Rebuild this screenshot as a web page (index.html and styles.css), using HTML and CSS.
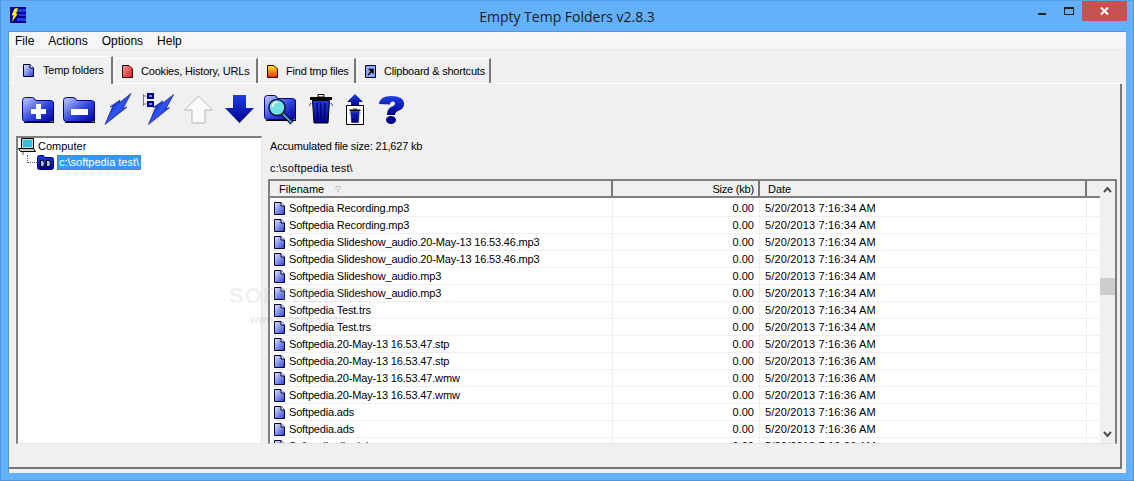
FILE: index.html
```html
<!DOCTYPE html>
<html lang="en">
<head>
    <meta charset="UTF-8">
    <title>Empty Temp Folders v2.8.3</title>
    <link rel="stylesheet" href="styles.css">
</head>
<body>
    <svg class="defs" width="0" height="0">
        <defs>
            <linearGradient id="blueDiag" x1="0" y1="0" x2="1" y2="1">
                <stop offset="0" stop-color="#c4d0fa"/>
                <stop offset="0.55" stop-color="#2f45e0"/>
                <stop offset="1" stop-color="#00009a"/>
            </linearGradient>
            <linearGradient id="blueDown" x1="0" y1="0" x2="0" y2="1">
                <stop offset="0" stop-color="#1d3fe0"/>
                <stop offset="1" stop-color="#00008c"/>
            </linearGradient>
            <linearGradient id="boltGrad" x1="0" y1="0" x2="1" y2="1">
                <stop offset="0" stop-color="#00008c"/>
                <stop offset="0.5" stop-color="#2e55f0"/>
                <stop offset="1" stop-color="#00008c"/>
            </linearGradient>
            <linearGradient id="pageBlue" x1="0" y1="0" x2="1" y2="1">
                <stop offset="0" stop-color="#e4e8fb"/>
                <stop offset="1" stop-color="#2c3fd8"/>
            </linearGradient>
            <linearGradient id="pageRed" x1="0" y1="0" x2="1" y2="1">
                <stop offset="0" stop-color="#fb9a9a"/>
                <stop offset="1" stop-color="#d81818"/>
            </linearGradient>
            <linearGradient id="pageFire" x1="0" y1="0" x2="0" y2="1">
                <stop offset="0" stop-color="#ffee20"/>
                <stop offset="1" stop-color="#e82a10"/>
            </linearGradient>
            <symbol id="page" viewBox="0 0 11 13">
                <path d="M.5.5h6.500l3.500 3.500v8.500h-10z" fill="url(#pageBlue)" stroke="#000038"/>
                <path d="M7 .5v3.500h3.500" fill="#fff" stroke="#000038"/>
            </symbol>
            <symbol id="folder" viewBox="0 0 33 29">
                <path d="M2 28h30v-21h-1v20h-29z" fill="#000"/>
                <path d="M.5 5.500q0-3 3-3h7q2 0 3 3h15q3 0 3 3v15q0 3-3 3h-25q-3 0-3-3z" fill="url(#blueDiag)" stroke="#00008c"/>
            </symbol>
            <symbol id="bolt" viewBox="0 0 28 32">
                <path d="M27 .5l-8 15 4-1.500-22 17.500 8-19-3 1.500 10-7-1 3z" fill="url(#boltGrad)" stroke="#00008c" stroke-width=".6"/>
            </symbol>
            <symbol id="bin" viewBox="0 0 24 30">
                <path d="M9 .5h6v2.500h-6z" fill="#fff" stroke="#000"/>
                <path d="M1 3h22v3h-22z" fill="#000"/>
                <path d="M3.500 6.500h17l-1.500 22.500h-14z" fill="url(#blueDown)" stroke="#000"/>
                <path d="M8 9l.7 17M12 9v17M16 9l-.7 17" stroke="#00006a" stroke-width="1.400"/>
                <path d="M2 9l-2 3M22 9l2 3" stroke="#444" fill="none"/>
            </symbol>
        </defs>
    </svg>

    <div class="window">
        <header class="titlebar">
            <svg class="app_icon" width="16" height="16" viewBox="0 0 16 16">
                <rect width="16" height="16" fill="#00008c"/>
                <path d="M7 2h9v3h-9zM9 7h7v2h-7zM7 11h9v3h-9z" fill="#1b3ff0"/>
                <path d="M8 1l-2 6 2-.5-6 8.500 1.500-7-2 .5 3-7z" fill="#ffee00"/>
            </svg>
            <div class="title">Empty Temp Folders v2.8.3</div>
            <div class="caption_btns">
                <span class="cap_min"></span>
                <span class="cap_max"></span>
                <span class="cap_close">
                    <svg width="9" height="8" viewBox="0 0 9 8"><path d="M1 .5l7 7M8 .5l-7 7" stroke="#fff" stroke-width="2"/></svg>
                </span>
            </div>
        </header>

        <div class="client">
            <nav class="menubar">
                <span>File</span>
                <span>Actions</span>
                <span>Options</span>
                <span>Help</span>
            </nav>

            <div class="tabs">
                <div class="tab active t1"><svg class="tab_icon" width="11" height="13"><use href="#page"/></svg>Temp folders</div>
                <div class="tab t2">
                    <svg class="tab_icon" width="11" height="13" viewBox="0 0 11 13"><path d="M.5.5h6.500l3.500 3.500v8.500h-10z" fill="url(#pageRed)" stroke="#300"/></svg>Cookies, History, URLs
                </div>
                <div class="tab t3">
                    <svg class="tab_icon" width="11" height="13" viewBox="0 0 11 13"><path d="M.5.5h6.500l3.500 3.500v8.500h-10z" fill="url(#pageFire)" stroke="#300"/></svg>Find tmp files
                </div>
                <div class="tab t4">
                    <svg class="tab_icon" width="11" height="13" viewBox="0 0 11 13"><path d="M.5.5h10v12h-10z" fill="#8ea6f5" stroke="#000038"/><path d="M3 10l4-4M4.500 4.500h3.500v3.500z" stroke="#000" fill="#000" stroke-width="1.300"/></svg>Clipboard &amp; shortcuts
                </div>
            </div>

            <div class="page">
                <div class="toolbar">
                    <button class="tool m8"><svg width="33" height="29"><use href="#folder"/><path d="M14 11h5v5h5v5h-5v5h-5v-5h-5v-5h5z" fill="#fff" transform="translate(0 -2)"/></svg></button>
                    <button class="tool m8"><svg width="33" height="29"><use href="#folder"/><path d="M8 14h17v6h-17z" fill="#fff"/></svg></button>
                    <button class="tool m10"><svg width="28" height="32"><use href="#bolt"/></svg></button>
                    <button class="tool m8">
                        <svg width="33" height="32" viewBox="0 0 33 32">
                            <path d="M1.500 1v12M1.500 3h3M1.500 11h3" stroke="#777" fill="none"/>
                            <path d="M5 0h7v6h-7zM5 8h7v6h-7z" fill="#00008c"/>
                            <path d="M7 2h3v2h-3zM7 10h3v2h-3z" fill="#6f8cf5"/>
                            <svg x="5" y="1" width="28" height="31"><use href="#bolt"/></svg>
                        </svg>
                    </button>
                    <button class="tool m10">
                        <svg width="31" height="29" viewBox="0 0 31 29"><path d="M15.500 1l14 14h-7.500v13h-13v-13h-7.500z" fill="#fbfbfb" stroke="#b4b4b4"/></svg>
                    </button>
                    <button class="tool m9">
                        <svg width="31" height="29" viewBox="0 0 31 29"><path d="M9 0h13v13h8l-14.500 15-14.500-15h8z" fill="url(#blueDown)"/></svg>
                    </button>
                    <button class="tool m12">
                        <svg width="33" height="32" viewBox="0 0 33 32">
                            <use href="#folder" width="33" height="29"/>
                            <path d="M18 20l10 10" stroke="#000" stroke-width="4"/>
                            <path d="M18 20l10 10" stroke="#4aa0e8" stroke-width="2"/>
                            <circle cx="13" cy="14.500" r="8" fill="#72e4e4" stroke="#113" stroke-width="1.500"/>
                            <path d="M8.500 14a5 5 0 0 1 5-5" stroke="#fff" fill="none" stroke-width="1.500"/>
                        </svg>
                    </button>
                    <button class="tool m13"><svg width="24" height="30"><use href="#bin"/></svg></button>
                    <button class="tool m14">
                        <svg width="18" height="31" viewBox="0 0 18 31">
                            <path d="M9 0l8 8h-4v4h-8v-4h-4z" fill="url(#blueDown)"/>
                            <path d="M.5 11.500h17v19h-17z" fill="#fff" stroke="#000"/>
                            <svg x="3" y="14" width="12" height="15" viewBox="0 0 24 30"><use href="#bin" width="24" height="30"/></svg>
                        </svg>
                    </button>
                    <button class="tool">
                        <svg width="27" height="29" viewBox="0 0 27 29">
                            <path d="M1 9q1-8 12-8 13 0 13 8 0 5-6 7-3 1-3 4h-8q0-6 4-8 4-1.500 4-3.500 0-2-2-2-3 0-3 3z" fill="url(#blueDown)"/>
                            <ellipse cx="13" cy="25" rx="5" ry="4" fill="#00008c"/>
                        </svg>
                    </button>
                </div>

                <div class="panes">
                    <div class="tree">
                        <div class="tree_row tree_root">
                            <svg width="19" height="17" viewBox="0 0 19 17">
                                <path d="M3.500 .5h12v10h-12z" fill="#cfd4dc" stroke="#000"/>
                                <path d="M5 2h9v7h-9z" fill="#27c4dc"/>
                                <path d="M.5 10.500h15l2 3h-15z" fill="#cdd0b8" stroke="#000"/>
                                <path d="M5 14v3" stroke="#555"/>
                            </svg>
                            <span>Computer</span>
                        </div>
                        <div class="tree_row tree_child">
                            <span class="tree_dots"></span>
                            <svg width="17" height="15" viewBox="0 0 17 15">
                                <path d="M.5 2.500q0-2 2-2h4l1 2h7q2 0 2 2v8q0 2-2 2h-12q-2 0-2-2z" fill="url(#blueDown)" stroke="#00008c"/>
                                <path d="M3.500 5.500h2q2 0 2 3t-2 3h-2zM9.500 5.500h2q2 0 2 3t-2 3h-2z" fill="#a8bcff" stroke="#000"/>
                            </svg>
                            <span class="tree_sel">c:\softpedia test\</span>
                        </div>
                    </div>

                    <div class="right">
                        <div class="info">Accumulated file size: 21,627 kb</div>
                        <div class="path">c:\softpedia test\</div>
                        <div class="list">
                            <div class="list_main">
                                <div class="list_head">
                                    <div class="hcell c_name">Filename<svg class="sort" width="6" height="7" viewBox="0 0 6 7"><path d="M.5 .5h5l-2.500 6z" fill="none" stroke="#c8c8c8"/></svg></div>
                                    <div class="hcell c_size">Size (kb)</div>
                                    <div class="hcell c_date">Date</div>
                                    <div class="hcell c_rest"></div>
                                </div>
                                <div class="list_body">
                                    <div class="row"><div class="cell c_name"><svg width="11" height="13"><use href="#page"/></svg>Softpedia Recording.mp3</div><div class="cell c_size">0.00</div><div class="cell c_date">5/20/2013 7:16:34 AM</div><div class="cell c_rest"></div></div>
                                    <div class="row"><div class="cell c_name"><svg width="11" height="13"><use href="#page"/></svg>Softpedia Recording.mp3</div><div class="cell c_size">0.00</div><div class="cell c_date">5/20/2013 7:16:34 AM</div><div class="cell c_rest"></div></div>
                                    <div class="row"><div class="cell c_name"><svg width="11" height="13"><use href="#page"/></svg>Softpedia Slideshow_audio.20-May-13 16.53.46.mp3</div><div class="cell c_size">0.00</div><div class="cell c_date">5/20/2013 7:16:34 AM</div><div class="cell c_rest"></div></div>
                                    <div class="row"><div class="cell c_name"><svg width="11" height="13"><use href="#page"/></svg>Softpedia Slideshow_audio.20-May-13 16.53.46.mp3</div><div class="cell c_size">0.00</div><div class="cell c_date">5/20/2013 7:16:34 AM</div><div class="cell c_rest"></div></div>
                                    <div class="row"><div class="cell c_name"><svg width="11" height="13"><use href="#page"/></svg>Softpedia Slideshow_audio.mp3</div><div class="cell c_size">0.00</div><div class="cell c_date">5/20/2013 7:16:34 AM</div><div class="cell c_rest"></div></div>
                                    <div class="row"><div class="cell c_name"><svg width="11" height="13"><use href="#page"/></svg>Softpedia Slideshow_audio.mp3</div><div class="cell c_size">0.00</div><div class="cell c_date">5/20/2013 7:16:34 AM</div><div class="cell c_rest"></div></div>
                                    <div class="row"><div class="cell c_name"><svg width="11" height="13"><use href="#page"/></svg>Softpedia Test.trs</div><div class="cell c_size">0.00</div><div class="cell c_date">5/20/2013 7:16:34 AM</div><div class="cell c_rest"></div></div>
                                    <div class="row"><div class="cell c_name"><svg width="11" height="13"><use href="#page"/></svg>Softpedia Test.trs</div><div class="cell c_size">0.00</div><div class="cell c_date">5/20/2013 7:16:34 AM</div><div class="cell c_rest"></div></div>
                                    <div class="row"><div class="cell c_name"><svg width="11" height="13"><use href="#page"/></svg>Softpedia.20-May-13 16.53.47.stp</div><div class="cell c_size">0.00</div><div class="cell c_date">5/20/2013 7:16:36 AM</div><div class="cell c_rest"></div></div>
                                    <div class="row"><div class="cell c_name"><svg width="11" height="13"><use href="#page"/></svg>Softpedia.20-May-13 16.53.47.stp</div><div class="cell c_size">0.00</div><div class="cell c_date">5/20/2013 7:16:36 AM</div><div class="cell c_rest"></div></div>
                                    <div class="row"><div class="cell c_name"><svg width="11" height="13"><use href="#page"/></svg>Softpedia.20-May-13 16.53.47.wmw</div><div class="cell c_size">0.00</div><div class="cell c_date">5/20/2013 7:16:36 AM</div><div class="cell c_rest"></div></div>
                                    <div class="row"><div class="cell c_name"><svg width="11" height="13"><use href="#page"/></svg>Softpedia.20-May-13 16.53.47.wmw</div><div class="cell c_size">0.00</div><div class="cell c_date">5/20/2013 7:16:36 AM</div><div class="cell c_rest"></div></div>
                                    <div class="row"><div class="cell c_name"><svg width="11" height="13"><use href="#page"/></svg>Softpedia.ads</div><div class="cell c_size">0.00</div><div class="cell c_date">5/20/2013 7:16:36 AM</div><div class="cell c_rest"></div></div>
                                    <div class="row"><div class="cell c_name"><svg width="11" height="13"><use href="#page"/></svg>Softpedia.ads</div><div class="cell c_size">0.00</div><div class="cell c_date">5/20/2013 7:16:36 AM</div><div class="cell c_rest"></div></div>
                                    <div class="row"><div class="cell c_name"><svg width="11" height="13"><use href="#page"/></svg>Softpedia.dbg.ini</div><div class="cell c_size">0.00</div><div class="cell c_date">5/20/2013 7:16:36 AM</div><div class="cell c_rest"></div></div>
                                </div>
                            </div>
                            <div class="scrollbar">
                                <svg class="arrow" width="9" height="7" viewBox="0 0 9 7"><path d="M1 6l3.500-4 3.500 4" fill="none" stroke="#505050" stroke-width="2"/></svg>
                                <div class="thumb"></div>
                                <svg class="arrow arrow_down" width="9" height="7" viewBox="0 0 9 7"><path d="M1 1l3.500 4 3.500-4" fill="none" stroke="#505050" stroke-width="2"/></svg>
                            </div>
                        </div>
                    </div>
                </div>
            </div>

            <div class="statusbar"></div>
        </div>

        <div class="wm wm_big">SOFTPEDIA</div>
        <div class="wm wm_small">www.softpedia.com</div>
    </div>
</body>
</html>
```

FILE: styles.css
```css
* {
    box-sizing: border-box;
}

html, body {
    margin: 0;
    height: 100%;
    overflow: hidden;
}

body {
    font-family: "Liberation Sans", Arial, sans-serif;
    font-size: 11px;
    color: #000;
}

.defs {
    display: block;
    height: 0;
}

.window {
    width: 1134px;
    height: 481px;
    background-color: #63b0fb;
    border: 1px solid #5595d8;
    border-top-color: #5b9fe2;
    padding: 0 7px 7px 7px;
    display: flex;
    flex-direction: column;
    position: relative;
}

.titlebar {
    height: 30px;
    flex: none;
    display: flex;
    align-items: flex-start;
    position: relative;
}

.app_icon {
    margin: 6px 0 0 2px;
}

.title {
    position: absolute;
    left: 0;
    right: 0;
    top: 6px;
    text-align: center;
    font-family: "Open Sans", sans-serif;
    font-size: 14px;
    line-height: 20px;
    color: #1c1c1c;
}

.caption_btns {
    margin-left: auto;
    margin-right: -1px;
    display: flex;
    position: relative;
}

.cap_min {
    width: 8px;
    height: 2px;
    background-color: #222;
    margin: 12px 0 0 0;
}

.cap_max {
    width: 10px;
    height: 8px;
    border: 1px solid #222;
    border-top-width: 2px;
    margin: 6px 0 0 18px;
}

.cap_close {
    width: 45px;
    height: 20px;
    margin: 0 0 0 8px;
    background-color: #c75050;
    display: flex;
    align-items: center;
    justify-content: center;
}

.client {
    flex: 1;
    min-height: 0;
    background-color: #f0f0f0;
    display: flex;
    flex-direction: column;
    border-top: 1px solid #5595d8;
    border-left: 1px solid #5595d8;
    padding-bottom: 4px;
}

.menubar {
    height: 18px;
    flex: none;
    background-color: #f5f6f8;
    border-bottom: 1px solid #ebebeb;
    display: flex;
    align-items: center;
    font-size: 12px;
    padding-left: 6px;
    gap: 14px;
}

.tabs {
    height: 34px;
    flex: none;
    display: flex;
    align-items: flex-end;
    padding-left: 4px;
    gap: 1px;
    border-bottom: 1px solid #fff;
    margin-right: 4px;
}

.tab {
    height: 25px;
    display: flex;
    align-items: center;
    background-color: #f0f0f0;
    border-top: 1px solid #fff;
    border-left: 1px solid #fff;
    border-right: 2px solid #777;
    border-top-left-radius: 2px;
    padding-left: 7px;
    white-space: nowrap;
    letter-spacing: -0.2px;
}

.tab_icon {
    margin-right: 8px;
    flex: none;
}

.tab.active {
    height: 28px;
    margin-bottom: -1px;
    padding-left: 9px;
    padding-bottom: 1px;
    position: relative;
    z-index: 1;
}

.tab.active .tab_icon {
    margin-right: 9px;
}

.t1 { width: 100px; }
.t2 { width: 144px; }
.t3 { width: 97px; }
.t4 { width: 134px; }

.page {
    flex: 1;
    min-height: 0;
    display: flex;
    flex-direction: column;
    border-right: 2px solid #777;
    padding: 9px 3px 0 7px;
    margin-right: 4px;
}

.toolbar {
    height: 43px;
    flex: none;
    display: flex;
    align-items: flex-start;
    padding-left: 6px;
}

.tool {
    border: none;
    background: none;
    padding: 0;
    height: 32px;
    display: flex;
    align-items: center;
}

.tool svg {
    display: block;
}

.m8 { margin-right: 8px; }
.m9 { margin-right: 9px; }
.m10 { margin-right: 10px; }
.m12 { margin-right: 12px; }
.m13 { margin-right: 13px; }
.m14 { margin-right: 14px; }

.panes {
    flex: 1;
    min-height: 0;
    display: flex;
    gap: 6px;
}

.tree {
    width: 246px;
    flex: none;
    background-color: #fff;
    border-top: 2px solid #808080;
    border-left: 2px solid #808080;
    border-right: 1px solid #e4e4e4;
    border-bottom: 1px solid #e4e4e4;
}

.tree_row {
    display: flex;
    align-items: center;
    height: 17px;
}

.tree_root {
    height: 16px;
}

.tree_root span {
    margin-left: 1px;
}

.tree_child {
    padding-left: 9px;
}

.tree_dots {
    width: 10px;
    height: 8px;
    margin: -8px 0 0 0;
    border-left: 1px dotted #666;
    border-bottom: 1px dotted #666;
}

.tree_sel {
    margin-left: 3px;
    padding: 0 1px;
    height: 15px;
    line-height: 13px;
    background-color: #3399ff;
    color: #fff;
    border: 1px dotted #b8641a;
}

.right {
    flex: 1;
    min-width: 0;
    display: flex;
    flex-direction: column;
}

.info {
    height: 21px;
    padding: 4px 0 0 2px;
    line-height: 13px;
    letter-spacing: -0.17px;
}

.path {
    height: 22px;
    padding: 5px 0 0 2px;
    line-height: 13px;
    letter-spacing: 0.15px;
}

.list {
    flex: 1;
    min-height: 0;
    display: flex;
    background-color: #fff;
    border-top: 2px solid #808080;
    border-left: 2px solid #808080;
    border-right: 2px solid #808080;
    border-bottom: 1px solid #e4e4e4;
    overflow: hidden;
}

.list_main {
    flex: 1;
    min-width: 0;
    display: flex;
    flex-direction: column;
}

.list_head {
    height: 17px;
    flex: none;
    display: flex;
    background-color: #f0f0f0;
    border-bottom: 2px solid #808080;
}

.hcell {
    border-right: 2px solid #777;
    line-height: 14px;
    padding-top: 1px;
    white-space: nowrap;
}

.c_name { width: 343px; flex: none; }
.c_size { width: 147px; flex: none; text-align: right; }
.c_date { width: 327px; flex: none; }
.c_rest { flex: 1; border-right: none; }

.hcell.c_name { padding-left: 9px; }
.hcell.c_size { padding-right: 4px; letter-spacing: -0.2px; }
.hcell.c_date { padding-left: 8px; }

.sort {
    margin-left: 11px;
}

.list_body {
    flex: 1;
    min-height: 0;
    padding-top: 2px;
    overflow: hidden;
}

.row {
    height: 17px;
    display: flex;
    border-bottom: 1px solid #efefef;
}

.cell {
    height: 16px;
    line-height: 16px;
    border-right: 1px solid #efefef;
    white-space: nowrap;
}

.cell.c_name {
    padding-left: 4px;
    display: flex;
    align-items: center;
    letter-spacing: -0.17px;
}

.cell.c_name svg {
    margin-right: 4px;
    flex: none;
}

.cell.c_size { padding-right: 5px; }
.cell.c_date { padding-left: 5px; letter-spacing: 0.16px; }
.cell.c_rest { border-right: none; }

.scrollbar {
    width: 15px;
    flex: none;
    background-color: #f0f0f0;
    display: flex;
    flex-direction: column;
    align-items: center;
    position: relative;
}

.arrow {
    margin-top: 5px;
    flex: none;
}

.arrow_down {
    margin: auto 0 5px 0;
}

.thumb {
    position: absolute;
    top: 97px;
    left: 0;
    width: 15px;
    height: 17px;
    background-color: #cdcdcd;
}

.statusbar {
    height: 25px;
    flex: none;
    border-bottom: 2px solid #777;
    margin-right: 4px;
    border-right: 2px solid #777;
}

/* watermark over the panes */
.wm {
    position: absolute;
    white-space: nowrap;
    pointer-events: none;
}

.wm_big {
    left: 228px;
    top: 282px;
    font-size: 22px;
    font-weight: 700;
    letter-spacing: 1px;
    color: rgba(190, 190, 190, 0.22);
}

.wm_small {
    left: 249px;
    top: 312px;
    font-size: 11px;
    color: rgba(150, 150, 150, 0.3);
}
```
